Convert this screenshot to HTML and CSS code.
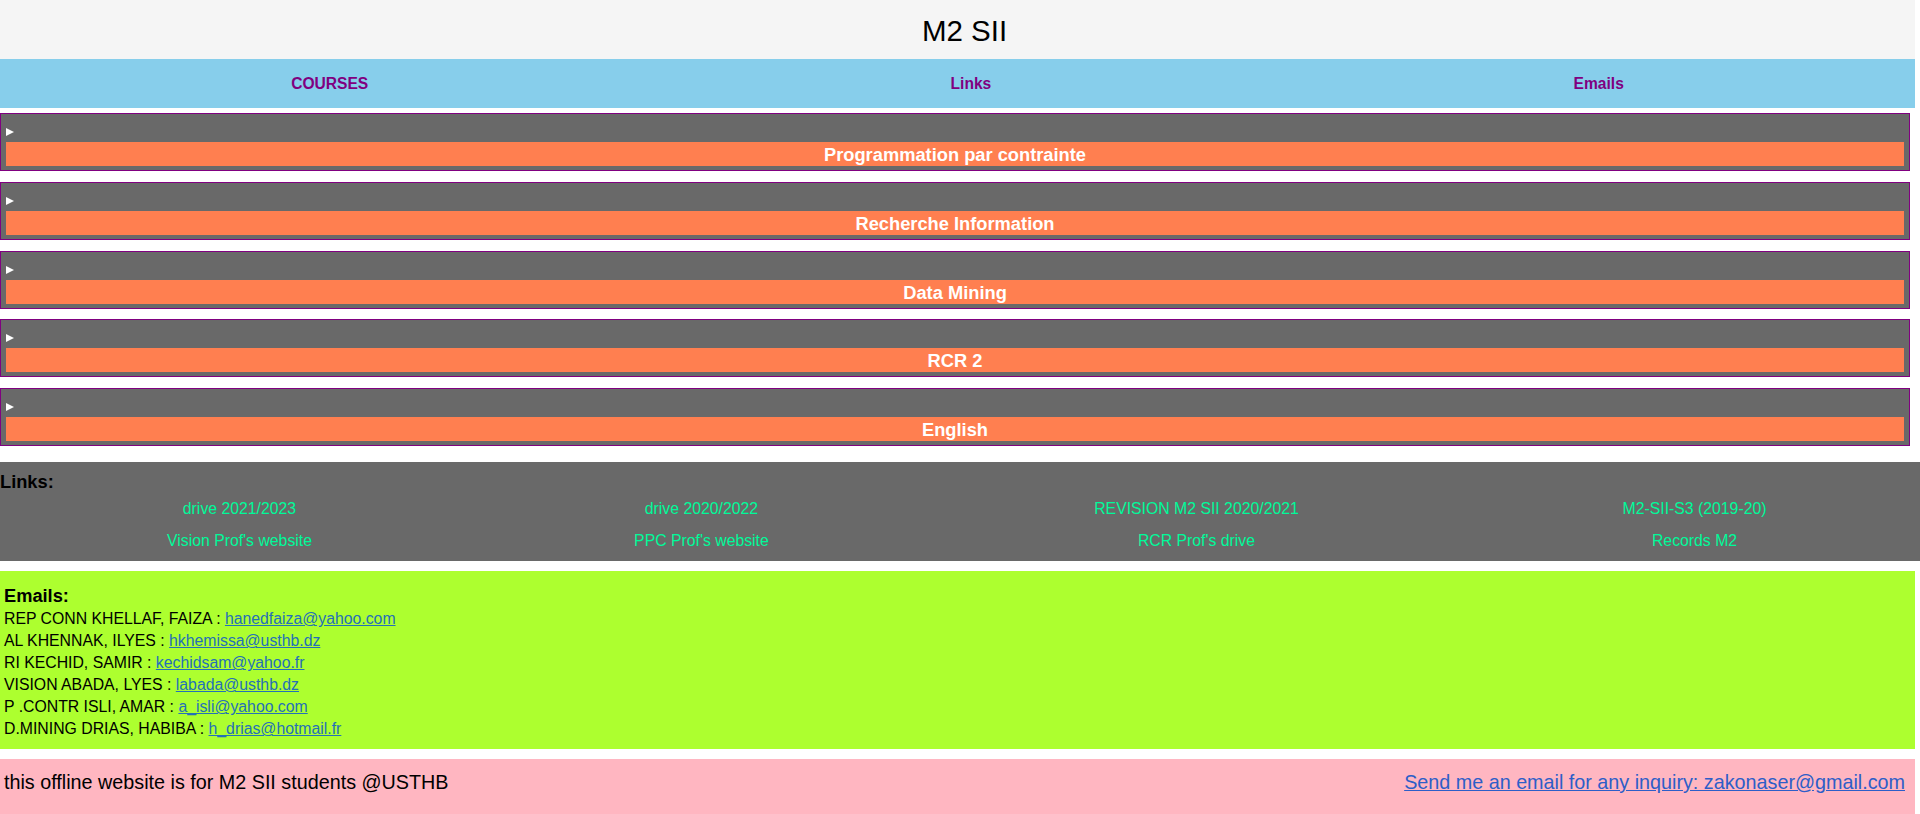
FILE: index.html
```html
<!DOCTYPE html>
<html lang="fr">
<head>
<meta charset="utf-8">
<title>M2 SII</title>
<link rel="stylesheet" href="styles.css">
</head>
<body>
<div class="page">
  <header class="site-header">
    <h1 class="site-title">M2 SII</h1>
  </header>
  <nav class="main-nav">
    <a class="nav-link" href="#courses">COURSES</a>
    <a class="nav-link" href="#links">Links</a>
    <a class="nav-link" href="#emails">Emails</a>
  </nav>

  <section class="courses" id="courses">
    <details class="course">
      <summary class="course-summary"><h3 class="course-title">Programmation par contrainte</h3></summary>
    </details>
    <details class="course">
      <summary class="course-summary"><h3 class="course-title">Recherche Information</h3></summary>
    </details>
    <details class="course">
      <summary class="course-summary"><h3 class="course-title">Data Mining</h3></summary>
    </details>
    <details class="course">
      <summary class="course-summary"><h3 class="course-title">RCR 2</h3></summary>
    </details>
    <details class="course">
      <summary class="course-summary"><h3 class="course-title">English</h3></summary>
    </details>
  </section>

  <section class="links" id="links">
    <h3 class="links-title">Links:</h3>
    <div class="links-grid">
      <a class="ext-link" href="#">drive 2021/2023</a>
      <a class="ext-link" href="#">drive 2020/2022</a>
      <a class="ext-link" href="#">REVISION M2 SII 2020/2021</a>
      <a class="ext-link" href="#">M2-SII-S3 (2019-20)</a>
      <a class="ext-link" href="#">Vision Prof's website</a>
      <a class="ext-link" href="#">PPC Prof's website</a>
      <a class="ext-link" href="#">RCR Prof's drive</a>
      <a class="ext-link" href="#">Records M2</a>
    </div>
  </section>

  <section class="emails" id="emails">
    <h3 class="emails-title">Emails:</h3>
    <div class="email-row">REP CONN KHELLAF, FAIZA : <a class="mail-link" href="#">hanedfaiza@yahoo.com</a></div>
    <div class="email-row">AL KHENNAK, ILYES : <a class="mail-link" href="#">hkhemissa@usthb.dz</a></div>
    <div class="email-row">RI KECHID, SAMIR : <a class="mail-link" href="#">kechidsam@yahoo.fr</a></div>
    <div class="email-row">VISION ABADA, LYES : <a class="mail-link" href="#">labada@usthb.dz</a></div>
    <div class="email-row">P .CONTR ISLI, AMAR : <a class="mail-link" href="#">a_isli@yahoo.com</a></div>
    <div class="email-row">D.MINING DRIAS, HABIBA : <a class="mail-link" href="#">h_drias@hotmail.fr</a></div>
  </section>

  <footer class="site-footer">
    <span class="footer-note">this offline website is for M2 SII students @USTHB</span>
    <a class="footer-link" href="#">Send me an email for any inquiry: zakonaser@gmail.com</a>
  </footer>
</div>
</body>
</html>
```

FILE: styles.css
```css
html, body {
  margin: 0;
  padding: 0;
  background: #ffffff;
}

body {
  font-family: "Liberation Sans", Arial, sans-serif;
  font-size: 15.6px;
  color: #000000;
  overflow-x: hidden;
}

.page {
  width: calc(100% - 5px);
}

/* Header */
.site-header {
  background: #f5f5f5;
  height: 59px;
}

.site-title {
  margin: 0;
  padding: 3px 0 0 14px;
  font-size: 29.5px;
  font-weight: normal;
  line-height: 56px;
  text-align: center;
}

/* Navigation */
.main-nav {
  background: #87ceeb;
  height: 49px;
  display: flex;
  justify-content: space-around;
  align-items: center;
}

.nav-link {
  color: #800080;
  font-weight: bold;
  text-decoration: none;
  line-height: 18px;
}

/* Courses */
.courses {
  padding-top: 5px;
  display: flex;
  flex-direction: column;
  gap: 10.75px;
}

.course {
  margin-right: 5px;
  border: 1px solid #800080;
  background: #696969;
  padding: 5px 5px 4px 5px;
}

.course-summary {
  display: block;
  list-style: none;
  cursor: pointer;
}

.course-summary::-webkit-details-marker {
  display: none;
}

.course-summary::before {
  content: "";
  display: block;
  width: 0;
  height: 0;
  margin: 9px 0 6px 0;
  border-left: 8px solid #ffffff;
  border-top: 4px solid transparent;
  border-bottom: 4px solid transparent;
}

.course-title {
  margin: 0;
  padding-top: 2px;
  background: #ff7f50;
  color: #ffffff;
  font-size: 18.3px;
  font-weight: bold;
  line-height: 22px;
  text-align: center;
}

/* Links */
.links {
  margin-top: 15.75px;
  margin-right: -5px;
  background: #696969;
  padding: 8px 0 4px 0;
}

.links-title {
  margin: 0;
  font-size: 18.25px;
  font-weight: bold;
  line-height: 23px;
}

.links-grid {
  display: grid;
  grid-template-columns: 478fr 444fr 544fr 450fr;
  grid-auto-rows: 32px;
  align-items: center;
  font-size: 15.8px;
}

.ext-link {
  color: #00fa9a;
  text-decoration: none;
  text-align: center;
  line-height: 32px;
}

/* Emails */
.emails {
  margin-top: 10px;
  background: #adff2f;
  padding: 12px 4px 8.75px 4px;
}

.emails-title {
  margin: 0;
  font-size: 18.25px;
  font-weight: bold;
  line-height: 25.5px;
}

.email-row {
  font-size: 15.8px;
  line-height: 22px;
}

.mail-link {
  color: #2470b8;
  text-decoration: underline;
}

/* Footer */
.site-footer {
  margin-top: 10px;
  background: #ffb6c1;
  padding: 11px 10px 24px 4px;
  display: flex;
  justify-content: space-between;
  align-items: baseline;
  font-size: 19.75px;
  line-height: 24px;
}

.footer-link {
  color: #2d5ec8;
  text-decoration: underline;
}
```
